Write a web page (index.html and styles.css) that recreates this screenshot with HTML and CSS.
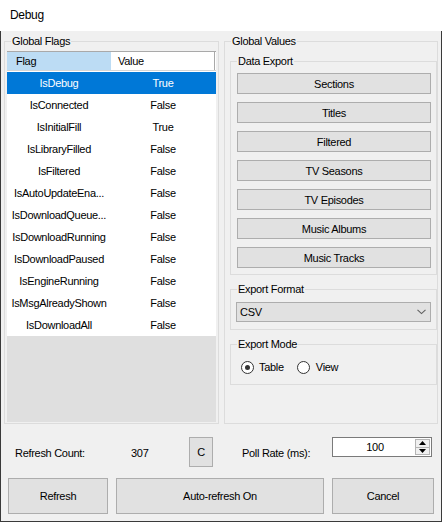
FILE: index.html
```html
<!DOCTYPE html>
<html>
<head>
<meta charset="utf-8">
<title>Debug</title>
<link rel="stylesheet" href="styles.css">
</head>
<body>
<div class="window">
  <div class="titlebar">Debug</div>
  <div class="client">
    <div class="panels">
      <fieldset class="group flags">
        <legend>Global Flags</legend>
        <div class="grid">
          <div class="grid-head">
            <div class="hcell hot">Flag</div>
            <div class="hcell">Value</div>
          </div>
          <div class="grid-rows">
            <div class="row sel"><span>IsDebug</span><span>True</span></div>
            <div class="row"><span>IsConnected</span><span>False</span></div>
            <div class="row"><span>IsInitialFill</span><span>True</span></div>
            <div class="row"><span>IsLibraryFilled</span><span>False</span></div>
            <div class="row"><span>IsFiltered</span><span>False</span></div>
            <div class="row"><span>IsAutoUpdateEna...</span><span>False</span></div>
            <div class="row"><span>IsDownloadQueue...</span><span>False</span></div>
            <div class="row"><span>IsDownloadRunning</span><span>False</span></div>
            <div class="row"><span>IsDownloadPaused</span><span>False</span></div>
            <div class="row"><span>IsEngineRunning</span><span>False</span></div>
            <div class="row"><span>IsMsgAlreadyShown</span><span>False</span></div>
            <div class="row"><span>IsDownloadAll</span><span>False</span></div>
          </div>
        </div>
      </fieldset>
      <fieldset class="group values">
        <legend>Global Values</legend>
        <fieldset class="group sub export">
          <legend>Data Export</legend>
          <div class="btn-list">
            <button class="btn list-btn">Sections</button>
            <button class="btn list-btn">Titles</button>
            <button class="btn list-btn">Filtered</button>
            <button class="btn list-btn">TV Seasons</button>
            <button class="btn list-btn">TV Episodes</button>
            <button class="btn list-btn">Music Albums</button>
            <button class="btn list-btn">Music Tracks</button>
          </div>
        </fieldset>
        <fieldset class="group sub format">
          <legend>Export Format</legend>
          <div class="combo">
            <span class="combo-text">CSV</span>
            <svg class="chev" width="9" height="6" viewBox="0 0 9 6"><path d="M0.5 0.8 L4.5 4.6 L8.5 0.8" fill="none" stroke="#606060" stroke-width="1.1"/></svg>
          </div>
        </fieldset>
        <fieldset class="group sub mode">
          <legend>Export Mode</legend>
          <div class="radios">
            <label class="radio"><span class="dot checked"></span>Table</label>
            <label class="radio view"><span class="dot"></span>View</label>
          </div>
        </fieldset>
      </fieldset>
    </div>
    <div class="status">
      <span class="lbl count-lbl">Refresh Count:</span>
      <span class="lbl count-val">307</span>
      <button class="btn cbtn">C</button>
      <span class="lbl poll-lbl">Poll Rate (ms):</span>
      <div class="spin">
        <span class="spin-text">100</span>
        <div class="spin-btns">
          <div class="spin-up"><svg width="7" height="4" viewBox="0 0 7 4"><path d="M3.5 0 L7 4 L0 4 Z" fill="#000"/></svg></div>
          <div class="spin-down"><svg width="7" height="4" viewBox="0 0 7 4"><path d="M0 0 L7 0 L3.5 4 Z" fill="#000"/></svg></div>
        </div>
      </div>
    </div>
    <div class="actions">
      <button class="btn big">Refresh</button>
      <button class="btn big">Auto-refresh On</button>
      <button class="btn big">Cancel</button>
    </div>
  </div>
</div>
</body>
</html>
```
FILE: styles.css
```css
* { box-sizing: border-box; }
html, body { margin: 0; padding: 0; }
body {
  width: 442px;
  height: 522px;
  overflow: hidden;
  background: #f0f0f0;
  font-family: "Liberation Sans", Arial, sans-serif;
  font-size: 11px;
  letter-spacing: -0.3px;
  color: #000;
}
.window {
  width: 442px;
  height: 522px;
  display: flex;
  flex-direction: column;
}
.titlebar {
  flex: none;
  height: 31px;
  background: #fff;
  padding-left: 10px;
  font-size: 12px;
  line-height: 31px;
}
.client {
  flex: 1;
  background: #f0f0f0;
  border: 1px solid #3a3a3a;
  border-top: 0;
  display: flex;
  flex-direction: column;
}
.panels {
  flex: none;
  height: 393px;
  display: flex;
  gap: 5px;
  padding: 4px 3px 0 3px;
}
.group {
  margin: 0;
  padding: 0;
  min-width: 0;
  border: 1px solid #dcdcdc;
}
.group > legend {
  margin-left: 6px;
  padding: 0 1px;
  line-height: 13px;
  font-size: 11px;
}
.flags {
  width: 215px;
  display: flex;
  flex-direction: column;
  padding: 3px 2px 1px 0;
}
.grid {
  flex: 1;
  margin-left: 2px;
  background: #dfdfdf;
  display: flex;
  flex-direction: column;
}
.grid-head {
  display: grid;
  grid-template-columns: 104px 104px;
  height: 20px;
  border-top: 1px solid #a9a9a9;
  border-bottom: 1px solid #d5d5d5;
  background: #fff;
}
.hcell {
  line-height: 18px;
  padding-left: 7px;
}
.hcell.hot {
  background: #bcdcf4;
  padding-left: 9px;
}
.hcell + .hcell {
  border-right: 1px solid #a9a9a9;
}
.grid-rows {
  background: #fff;
  padding-top: 1px;
}
.row {
  display: grid;
  grid-template-columns: 104px 104px;
  height: 22px;
  align-items: center;
  text-align: center;
}
.row.sel {
  background: #0078d7;
  color: #fff;
}
.values {
  width: 214px;
  padding: 7px 0 0 0;
  display: flex;
  flex-direction: column;
}
.sub {
  width: 207px;
  margin-left: 5px;
}
.export {
  padding: 5px 5px 6px 0;
}
.btn-list {
  margin-left: 6px;
  display: flex;
  flex-direction: column;
  gap: 8px;
}
.btn {
  margin: 0;
  padding: 0;
  border: 1px solid #adadad;
  background: #e1e1e1;
  font-family: "Liberation Sans", Arial, sans-serif;
  font-size: 11px;
  letter-spacing: -0.3px;
  color: #000;
}
.list-btn {
  height: 21px;
  width: 194px;
}
.format {
  margin-top: 8px;
  padding: 6px 5px 7px 0;
}
.combo {
  margin-left: 5px;
  width: 195px;
  height: 20px;
  border: 1px solid #adadad;
  background: #e1e1e1;
  display: flex;
  align-items: center;
  justify-content: space-between;
  padding: 0 4px 0 3px;
}
.chev { display: block; }
.mode {
  margin-top: 8px;
  padding: 10px 5px 10px 0;
}
.radios {
  margin-left: 10px;
  display: flex;
  align-items: center;
  height: 13px;
}
.radio {
  display: flex;
  align-items: center;
  gap: 5px;
  line-height: 13px;
}
.radio.view {
  margin-left: 13px;
  gap: 6px;
}
.dot {
  width: 13px;
  height: 13px;
  border: 1px solid #333;
  border-radius: 50%;
  background: #fff;
  display: flex;
  align-items: center;
  justify-content: center;
}
.dot.checked::after {
  content: "";
  width: 5px;
  height: 5px;
  border-radius: 50%;
  background: #333;
}
.status {
  flex: none;
  height: 54px;
  display: flex;
  align-items: flex-start;
  padding: 13px 0 0 14px;
}
.lbl {
  margin-top: 10px;
  line-height: 13px;
  white-space: nowrap;
}
.count-lbl { width: 116px; }
.count-val { width: 58px; }
.cbtn {
  width: 24px;
  height: 30px;
}
.poll-lbl {
  margin-left: 29px;
  width: 90px;
}
.spin {
  width: 100px;
  height: 20px;
  border: 1px solid #7a7a7a;
  background: #fff;
  display: flex;
}
.spin-text {
  flex: 1;
  text-align: center;
  line-height: 18px;
  padding-left: 2px;
}
.spin-btns {
  width: 16px;
  display: flex;
  flex-direction: column;
  padding: 1px 1px 1px 0;
}
.spin-up, .spin-down {
  flex: 1;
  background: #f0f0f0;
  border: 1px solid #b4b4b4;
  display: flex;
  align-items: center;
  justify-content: center;
}
.spin-down { border-top: 0; }
.spin-up svg, .spin-down svg { display: block; }
.actions {
  flex: none;
  display: grid;
  grid-template-columns: 100px 208px 102px;
  column-gap: 8px;
  padding-left: 7px;
}
.big {
  height: 36px;
}
```
